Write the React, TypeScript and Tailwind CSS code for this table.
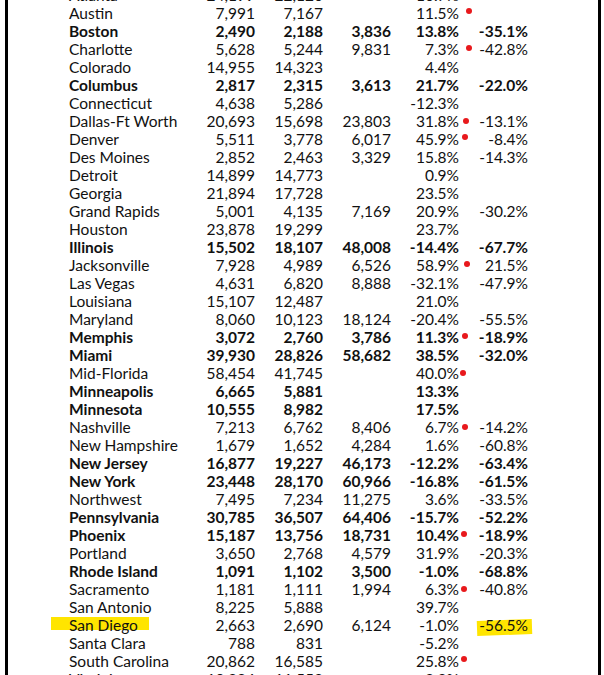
import React from "react";

interface Row {
  name: string;
  a: string;
  b: string;
  c?: string;
  pct: string;
  chg?: string;
  bold?: boolean;
  dot?: { x: number; y: number };
  mark?: boolean;
}

const rows: Row[] = [
  { name: "Atlanta", a: "24,199", b: "22,120", pct: "10.7%" },
  { name: "Austin", a: "7,991", b: "7,167", pct: "11.5%", dot: { x: 10, y: -2 } },
  { name: "Boston", a: "2,490", b: "2,188", c: "3,836", pct: "13.8%", chg: "-35.1%", bold: true },
  { name: "Charlotte", a: "5,628", b: "5,244", c: "9,831", pct: "7.3%", chg: "-42.8%", dot: { x: 10, y: -1 } },
  { name: "Colorado", a: "14,955", b: "14,323", pct: "4.4%" },
  { name: "Columbus", a: "2,817", b: "2,315", c: "3,613", pct: "21.7%", chg: "-22.0%", bold: true },
  { name: "Connecticut", a: "4,638", b: "5,286", pct: "-12.3%" },
  { name: "Dallas-Ft Worth", a: "20,693", b: "15,698", c: "23,803", pct: "31.8%", chg: "-13.1%", dot: { x: 7, y: 0 } },
  { name: "Denver", a: "5,511", b: "3,778", c: "6,017", pct: "45.9%", chg: "-8.4%", dot: { x: 6, y: -2 } },
  { name: "Des Moines", a: "2,852", b: "2,463", c: "3,329", pct: "15.8%", chg: "-14.3%" },
  { name: "Detroit", a: "14,899", b: "14,773", pct: "0.9%" },
  { name: "Georgia", a: "21,894", b: "17,728", pct: "23.5%" },
  { name: "Grand Rapids", a: "5,001", b: "4,135", c: "7,169", pct: "20.9%", chg: "-30.2%" },
  { name: "Houston", a: "23,878", b: "19,299", pct: "23.7%" },
  { name: "Illinois", a: "15,502", b: "18,107", c: "48,008", pct: "-14.4%", chg: "-67.7%", bold: true },
  { name: "Jacksonville", a: "7,928", b: "4,989", c: "6,526", pct: "58.9%", chg: "21.5%", dot: { x: 8, y: -1 } },
  { name: "Las Vegas", a: "4,631", b: "6,820", c: "8,888", pct: "-32.1%", chg: "-47.9%" },
  { name: "Louisiana", a: "15,107", b: "12,487", pct: "21.0%" },
  { name: "Maryland", a: "8,060", b: "10,123", c: "18,124", pct: "-20.4%", chg: "-55.5%" },
  { name: "Memphis", a: "3,072", b: "2,760", c: "3,786", pct: "11.3%", chg: "-18.9%", bold: true, dot: { x: 6, y: -1 } },
  { name: "Miami", a: "39,930", b: "28,826", c: "58,682", pct: "38.5%", chg: "-32.0%", bold: true },
  { name: "Mid-Florida", a: "58,454", b: "41,745", pct: "40.0%", dot: { x: 4, y: 0 } },
  { name: "Minneapolis", a: "6,665", b: "5,881", pct: "13.3%", bold: true },
  { name: "Minnesota", a: "10,555", b: "8,982", pct: "17.5%", bold: true },
  { name: "Nashville", a: "7,213", b: "6,762", c: "8,406", pct: "6.7%", chg: "-14.2%", dot: { x: 6, y: 0 } },
  { name: "New Hampshire", a: "1,679", b: "1,652", c: "4,284", pct: "1.6%", chg: "-60.8%" },
  { name: "New Jersey", a: "16,877", b: "19,227", c: "46,173", pct: "-12.2%", chg: "-63.4%", bold: true },
  { name: "New York", a: "23,448", b: "28,170", c: "60,966", pct: "-16.8%", chg: "-61.5%", bold: true },
  { name: "Northwest", a: "7,495", b: "7,234", c: "11,275", pct: "3.6%", chg: "-33.5%" },
  { name: "Pennsylvania", a: "30,785", b: "36,507", c: "64,406", pct: "-15.7%", chg: "-52.2%", bold: true },
  { name: "Phoenix", a: "15,187", b: "13,756", c: "18,731", pct: "10.4%", chg: "-18.9%", bold: true, dot: { x: 5, y: -1 } },
  { name: "Portland", a: "3,650", b: "2,768", c: "4,579", pct: "31.9%", chg: "-20.3%" },
  { name: "Rhode Island", a: "1,091", b: "1,102", c: "3,500", pct: "-1.0%", chg: "-68.8%", bold: true },
  { name: "Sacramento", a: "1,181", b: "1,111", c: "1,994", pct: "6.3%", chg: "-40.8%", dot: { x: 5, y: 0 } },
  { name: "San Antonio", a: "8,225", b: "5,888", pct: "39.7%" },
  { name: "San Diego", a: "2,663", b: "2,690", c: "6,124", pct: "-1.0%", chg: "-56.5%", mark: true },
  { name: "Santa Clara", a: "788", b: "831", pct: "-5.2%" },
  { name: "South Carolina", a: "20,862", b: "16,585", pct: "25.8%", dot: { x: 5, y: -2 } },
  { name: "Virginia", a: "10,284", b: "11,553", pct: "3.3%" },
];

const TableRow = ({ row }: { row: Row }) => (
  <div className={`flex h-[18px] shrink-0 leading-[18px] ${row.bold ? "font-bold" : ""}`}>
    <div className="relative w-[126px] whitespace-nowrap">
      {row.mark && (
        <span className="absolute left-[-18px] top-[1px] h-[13px] w-[98px] bg-[#ffe500]" />
      )}
      <span className="relative">{row.name}</span>
    </div>
    <div className="w-[60px] text-right">{row.a}</div>
    <div className="w-[68px] text-right">{row.b}</div>
    <div className="w-[68px] text-right">{row.c ?? ""}</div>
    <div className="relative w-[68px] text-right">
      {row.pct}
      {row.dot && (
        <span
          className="absolute top-[6px] h-[6px] w-[6px] rounded-full bg-[#e8191c]"
          style={{ left: `calc(100% + ${row.dot.x - 3}px)`, marginTop: row.dot.y }}
        />
      )}
    </div>
    <div className="relative w-[69px] text-right">
      {row.mark && (
        <span className="absolute right-[-4px] top-[4px] h-[15px] w-[55px] -rotate-2 bg-[#ffe500]" />
      )}
      <span className="relative">{row.chg ?? ""}</span>
    </div>
  </div>
);

export default function App() {
  return (
    <div
      className="h-[675px] w-[604px] overflow-hidden bg-white text-[15.5px] text-[#111]"
      style={{ fontFamily: "Lato, 'Open Sans', sans-serif" }}
    >
      <div className="ml-[5px] flex h-full w-[596px] flex-col overflow-hidden border-x-[3px] border-black">
        <div className="-mt-[14px] flex flex-col pl-[61px]">
          {rows.map((row) => (
            <TableRow key={row.name} row={row} />
          ))}
        </div>
      </div>
    </div>
  );
}
